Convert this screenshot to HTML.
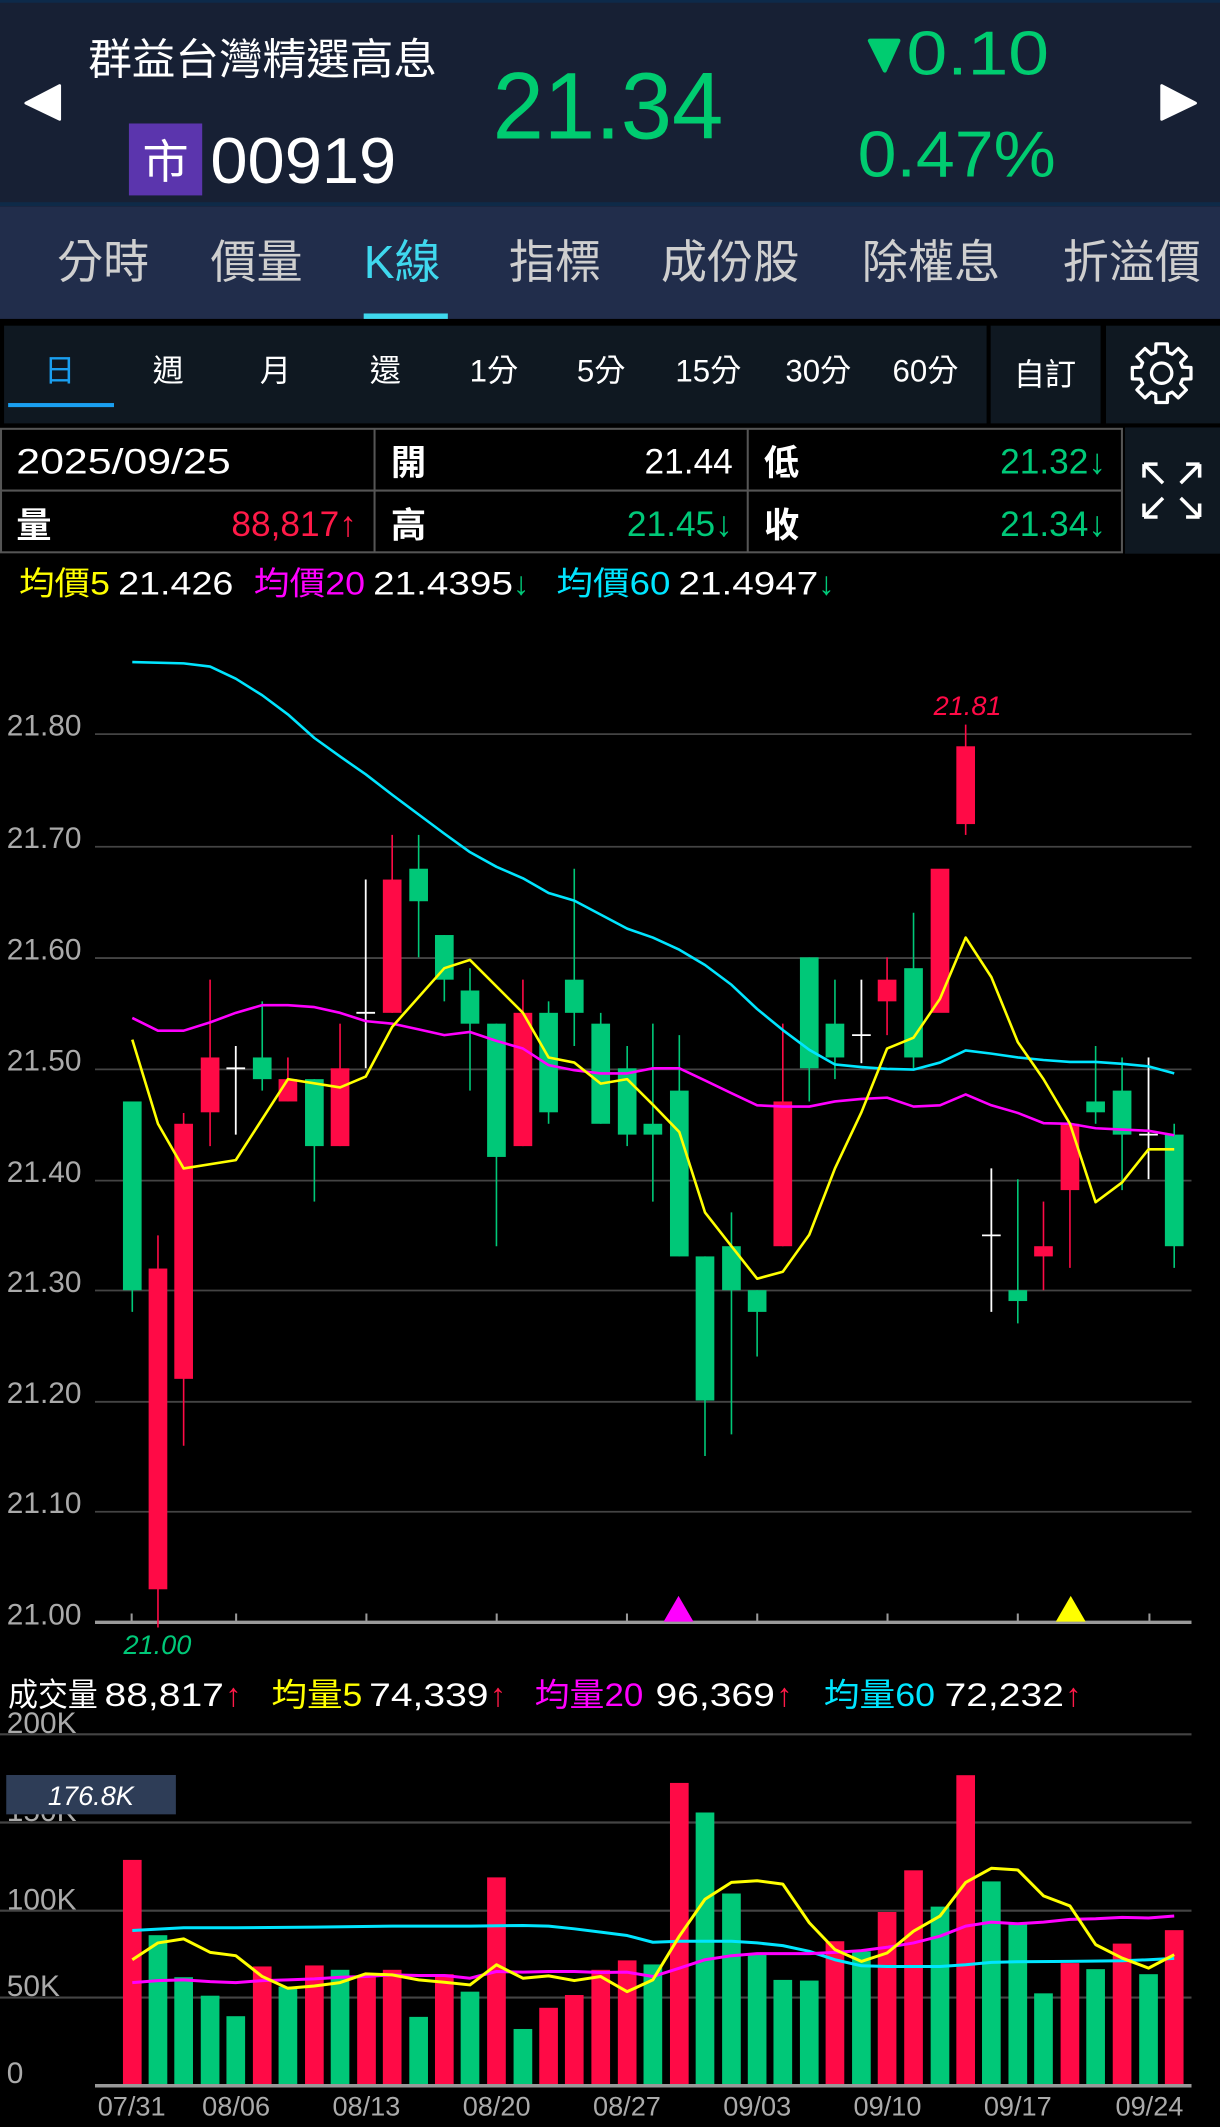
<!DOCTYPE html>
<html><head><meta charset="utf-8"><style>
html,body{margin:0;padding:0;background:#000;width:1220px;height:2127px;overflow:hidden}
svg{display:block}
text{font-family:"Liberation Sans","Noto Sans CJK TC",sans-serif}
</style></head><body>
<svg width="1220" height="2127" viewBox="0 0 899 1567.4" preserveAspectRatio="none" xmlns="http://www.w3.org/2000/svg">
<rect width="899" height="1568" fill="#000"/>
<!-- header -->
<rect x="0" y="0" width="899" height="151" fill="#172034"/>
<rect x="0" y="0" width="899" height="2" fill="#0d2a4a"/>
<rect x="0" y="149" width="899" height="3" fill="#0e2a48"/>
<text x="65" y="55" font-size="32" fill="#fff" textLength="257" lengthAdjust="spacingAndGlyphs">群益台灣精選高息</text>
<path d="M44 63 L44 88 L19 76 Z" fill="#fff" stroke="#fff" stroke-width="2" stroke-linejoin="round"/>
<path d="M856 63 L856 88 L881 76 Z" fill="#fff" stroke="#fff" stroke-width="2" stroke-linejoin="round"/>
<rect x="95" y="91" width="54" height="53" fill="#5b35ad"/>
<text x="122" y="131" font-size="34" fill="#fff" text-anchor="middle">市</text>
<text x="155" y="135" font-size="48" fill="#fff" textLength="137" lengthAdjust="spacingAndGlyphs">00919</text>
<text x="363" y="102" font-size="70" fill="#00cc70" textLength="170" lengthAdjust="spacingAndGlyphs">21.34</text>
<path d="M641 30 L662 30 L652 52 Z" fill="#00cc70" stroke="#00cc70" stroke-width="3" stroke-linejoin="round"/>
<text x="668" y="55" font-size="46" fill="#00cc70" textLength="105" lengthAdjust="spacingAndGlyphs">0.10</text>
<text x="632" y="130" font-size="48" fill="#00cc70" textLength="146" lengthAdjust="spacingAndGlyphs">0.47%</text>
<!-- tabs -->
<rect x="0" y="152" width="899" height="83" fill="#212d4b"/>
<g font-size="34" fill="#cfcfcf">
<text x="42" y="205">分時</text>
<text x="155" y="205">價量</text>
<text x="268" y="205" fill="#3fd8ee">K線</text>
<text x="375" y="205">指標</text>
<text x="487" y="205">成份股</text>
<text x="635" y="205">除權息</text>
<text x="783" y="205">折溢價</text>
</g>
<rect x="268" y="231" width="62" height="4" fill="#3fd8ee"/>
<!-- period bar -->
<rect x="3" y="240" width="724" height="72" fill="#0f1821"/>
<rect x="730" y="240" width="81" height="72" fill="#0f1821"/>
<rect x="815" y="240" width="84" height="72" fill="#0f1821"/>
<g font-size="23" fill="#fff" text-anchor="middle">
<text x="44" y="281" fill="#1a9ff0">日</text>
<text x="124" y="281">週</text>
<text x="203" y="281">月</text>
<text x="284" y="281">還</text>
<text x="364" y="281">1分</text>
<text x="443" y="281">5分</text>
<text x="522" y="281">15分</text>
<text x="603" y="281">30分</text>
<text x="682" y="281">60分</text>
<text x="770" y="284">自訂</text>
</g>
<rect x="6" y="297" width="78" height="3" fill="#1a9ff0"/>
<path transform="translate(856,275)" fill="none" stroke="#fff" stroke-width="2.4" stroke-linejoin="round" d="M-4.2,-21.6 L4.2,-21.6 L4.4,-15.4 L7.8,-14.0 L12.3,-18.2 L18.2,-12.3 L14.0,-7.8 L15.4,-4.4 L21.6,-4.2 L21.6,4.2 L15.4,4.4 L14.0,7.8 L18.2,12.3 L12.3,18.2 L7.8,14.0 L4.4,15.4 L4.2,21.6 L-4.2,21.6 L-4.4,15.4 L-7.8,14.0 L-12.3,18.2 L-18.2,12.3 L-14.0,7.8 L-15.4,4.4 L-21.6,4.2 L-21.6,-4.2 L-15.4,-4.4 L-14.0,-7.8 L-18.2,-12.3 L-12.3,-18.2 L-7.8,-14.0 L-4.4,-15.4 Z"/>
<circle cx="856" cy="275" r="7.5" fill="none" stroke="#fff" stroke-width="2.4"/>
<!-- info table -->
<rect x="829" y="315" width="70" height="93" fill="#0f1821"/>
<g fill="none" stroke="#555" stroke-width="1.5">
<rect x="0.75" y="316" width="826" height="91"/>
<line x1="0" y1="361.5" x2="827" y2="361.5"/>
<line x1="276" y1="316" x2="276" y2="407"/>
<line x1="551" y1="316" x2="551" y2="407"/>
</g>
<g font-size="26" fill="#fff">
<text x="12" y="349" textLength="158" lengthAdjust="spacingAndGlyphs">2025/09/25</text>
<text x="288" y="350" font-weight="bold">開</text>
<text x="540" y="349" text-anchor="end">21.44</text>
<text x="563" y="350" font-weight="bold">低</text>
<text x="815" y="349" text-anchor="end" fill="#00c878">21.32↓</text>
<text x="12" y="396" font-weight="bold">量</text>
<text x="263" y="395" text-anchor="end" fill="#ff1a48">88,817↑</text>
<text x="288" y="396" font-weight="bold">高</text>
<text x="540" y="395" text-anchor="end" fill="#00c878">21.45↓</text>
<text x="563" y="396" font-weight="bold">收</text>
<text x="815" y="395" text-anchor="end" fill="#00c878">21.34↓</text>
</g>
<g stroke="#fff" stroke-width="2.6" fill="none">
<path d="M843 342 L857 356 M843 342 L843 352 M843 342 L853 342"/>
<path d="M884 342 L870 356 M884 342 L884 352 M884 342 L874 342"/>
<path d="M843 381 L857 367 M843 381 L843 371 M843 381 L853 381"/>
<path d="M884 381 L870 367 M884 381 L884 371 M884 381 L874 381"/>
</g>
<!-- MA legend -->
<g font-size="24">
<text x="14" y="438" fill="#ffff00" textLength="67" lengthAdjust="spacingAndGlyphs">均價5</text>
<text x="87" y="438" fill="#fff" textLength="85" lengthAdjust="spacingAndGlyphs">21.426</text>
<text x="187" y="438" fill="#ff00ff" textLength="82" lengthAdjust="spacingAndGlyphs">均價20</text>
<text x="275" y="438" fill="#fff" textLength="103" lengthAdjust="spacingAndGlyphs">21.4395</text>
<text x="378" y="438" fill="#00c878">↓</text>
<text x="410" y="438" fill="#00e5ff" textLength="84" lengthAdjust="spacingAndGlyphs">均價60</text>
<text x="500" y="438" fill="#fff" textLength="103" lengthAdjust="spacingAndGlyphs">21.4947</text>
<text x="603" y="438" fill="#00c878">↓</text>
</g>
<!-- price grid -->
<g stroke="#444" stroke-width="1.3">
<line x1="70" y1="541" x2="878" y2="541"/>
<line x1="70" y1="624" x2="878" y2="624"/>
<line x1="70" y1="706" x2="878" y2="706"/>
<line x1="70" y1="788" x2="878" y2="788"/>
<line x1="70" y1="870" x2="878" y2="870"/>
<line x1="70" y1="951" x2="878" y2="951"/>
<line x1="70" y1="1033" x2="878" y2="1033"/>
<line x1="70" y1="1114" x2="878" y2="1114"/>
</g>
<g font-size="22" fill="#aaa">
<text x="5" y="542">21.80</text>
<text x="5" y="625">21.70</text>
<text x="5" y="707">21.60</text>
<text x="5" y="789">21.50</text>
<text x="5" y="871">21.40</text>
<text x="5" y="952">21.30</text>
<text x="5" y="1034">21.20</text>
<text x="5" y="1115">21.10</text>
<text x="5" y="1197">21.00</text>
</g>
<line x1="70" y1="1195.5" x2="878" y2="1195.5" stroke="#999" stroke-width="2.5"/>
<g stroke="#999" stroke-width="1.5">
<line x1="97" y1="1189" x2="97" y2="1195"/><line x1="174" y1="1189" x2="174" y2="1195"/>
<line x1="270" y1="1189" x2="270" y2="1195"/><line x1="366" y1="1189" x2="366" y2="1195"/>
<line x1="462" y1="1189" x2="462" y2="1195"/><line x1="558" y1="1189" x2="558" y2="1195"/>
<line x1="654" y1="1189" x2="654" y2="1195"/><line x1="750" y1="1189" x2="750" y2="1195"/>
<line x1="847" y1="1189" x2="847" y2="1195"/>
</g>
<g transform="translate(0,456.9) scale(0.5734,0.4699)">
<g>
<g stroke="#00c878" stroke-width="1.6">
<line x1="170" y1="755" x2="170" y2="1085" vector-effect="non-scaling-stroke"/>
<line x1="337" y1="598" x2="337" y2="738" vector-effect="non-scaling-stroke"/>
<line x1="404" y1="720" x2="404" y2="912" vector-effect="non-scaling-stroke"/>
<line x1="538" y1="337" x2="538" y2="529" vector-effect="non-scaling-stroke"/>
<line x1="571" y1="494" x2="571" y2="598" vector-effect="non-scaling-stroke"/>
<line x1="604" y1="546" x2="604" y2="738" vector-effect="non-scaling-stroke"/>
<line x1="638" y1="633" x2="638" y2="982" vector-effect="non-scaling-stroke"/>
<line x1="705" y1="598" x2="705" y2="790" vector-effect="non-scaling-stroke"/>
<line x1="738" y1="390" x2="738" y2="668" vector-effect="non-scaling-stroke"/>
<line x1="772" y1="616" x2="772" y2="790" vector-effect="non-scaling-stroke"/>
<line x1="806" y1="668" x2="806" y2="825" vector-effect="non-scaling-stroke"/>
<line x1="839" y1="633" x2="839" y2="912" vector-effect="non-scaling-stroke"/>
<line x1="873" y1="651" x2="873" y2="998" vector-effect="non-scaling-stroke"/>
<line x1="906" y1="998" x2="906" y2="1311" vector-effect="non-scaling-stroke"/>
<line x1="940" y1="929" x2="940" y2="1277" vector-effect="non-scaling-stroke"/>
<line x1="973" y1="1051" x2="973" y2="1155" vector-effect="non-scaling-stroke"/>
<line x1="1040" y1="529" x2="1040" y2="755" vector-effect="non-scaling-stroke"/>
<line x1="1073" y1="564" x2="1073" y2="720" vector-effect="non-scaling-stroke"/>
<line x1="1174" y1="459" x2="1174" y2="703" vector-effect="non-scaling-stroke"/>
<line x1="1308" y1="877" x2="1308" y2="1103" vector-effect="non-scaling-stroke"/>
<line x1="1408" y1="668" x2="1408" y2="790" vector-effect="non-scaling-stroke"/>
<line x1="1442" y1="686" x2="1442" y2="894" vector-effect="non-scaling-stroke"/>
<line x1="1509" y1="790" x2="1509" y2="1016" vector-effect="non-scaling-stroke"/>
</g>
<g stroke="#ff0a46" stroke-width="1.6">
<line x1="203" y1="965" x2="203" y2="1580" vector-effect="non-scaling-stroke"/>
<line x1="236" y1="773" x2="236" y2="1295" vector-effect="non-scaling-stroke"/>
<line x1="270" y1="564" x2="270" y2="825" vector-effect="non-scaling-stroke"/>
<line x1="370" y1="686" x2="370" y2="755" vector-effect="non-scaling-stroke"/>
<line x1="437" y1="633" x2="437" y2="825" vector-effect="non-scaling-stroke"/>
<line x1="504" y1="337" x2="504" y2="616" vector-effect="non-scaling-stroke"/>
<line x1="672" y1="564" x2="672" y2="825" vector-effect="non-scaling-stroke"/>
<line x1="1006" y1="633" x2="1006" y2="982" vector-effect="non-scaling-stroke"/>
<line x1="1140" y1="529" x2="1140" y2="651" vector-effect="non-scaling-stroke"/>
<line x1="1241" y1="164" x2="1241" y2="337" vector-effect="non-scaling-stroke"/>
<line x1="1341" y1="912" x2="1341" y2="1051" vector-effect="non-scaling-stroke"/>
<line x1="1375" y1="790" x2="1375" y2="1016" vector-effect="non-scaling-stroke"/>
</g>
<g stroke="#fff" stroke-width="1.8">
<line x1="303" y1="668" x2="303" y2="807" vector-effect="non-scaling-stroke"/>
<line x1="291" y1="703" x2="315" y2="703" vector-effect="non-scaling-stroke"/>
<line x1="470" y1="407" x2="470" y2="703" vector-effect="non-scaling-stroke"/>
<line x1="458" y1="616" x2="482" y2="616" vector-effect="non-scaling-stroke"/>
<line x1="1107" y1="564" x2="1107" y2="695" vector-effect="non-scaling-stroke"/>
<line x1="1095" y1="651" x2="1119" y2="651" vector-effect="non-scaling-stroke"/>
<line x1="1274" y1="860" x2="1274" y2="1085" vector-effect="non-scaling-stroke"/>
<line x1="1262" y1="965" x2="1286" y2="965" vector-effect="non-scaling-stroke"/>
<line x1="1476" y1="686" x2="1476" y2="877" vector-effect="non-scaling-stroke"/>
<line x1="1464" y1="807" x2="1488" y2="807" vector-effect="non-scaling-stroke"/>
</g>
</g>
<g fill="#00c878">
<rect x="158" y="755" width="24" height="296"/>
<rect x="325" y="686" width="24" height="34"/>
<rect x="392" y="720" width="24" height="105"/>
<rect x="526" y="390" width="24" height="51"/>
<rect x="559" y="494" width="24" height="70"/>
<rect x="592" y="581" width="24" height="52"/>
<rect x="626" y="633" width="24" height="209"/>
<rect x="693" y="616" width="24" height="156"/>
<rect x="726" y="564" width="24" height="52"/>
<rect x="760" y="633" width="24" height="157"/>
<rect x="794" y="703" width="24" height="104"/>
<rect x="827" y="790" width="24" height="17"/>
<rect x="861" y="738" width="24" height="260"/>
<rect x="894" y="998" width="24" height="226"/>
<rect x="928" y="982" width="24" height="69"/>
<rect x="961" y="1051" width="24" height="34"/>
<rect x="1028" y="529" width="24" height="174"/>
<rect x="1061" y="633" width="24" height="53"/>
<rect x="1162" y="546" width="24" height="140"/>
<rect x="1296" y="1051" width="24" height="17"/>
<rect x="1396" y="755" width="24" height="17"/>
<rect x="1430" y="738" width="24" height="69"/>
<rect x="1497" y="807" width="24" height="175"/>
</g>
<g fill="#ff0a46">
<rect x="191" y="1017" width="24" height="503"/>
<rect x="224" y="790" width="24" height="400"/>
<rect x="258" y="686" width="24" height="86"/>
<rect x="358" y="720" width="24" height="35"/>
<rect x="425" y="703" width="24" height="122"/>
<rect x="492" y="407" width="24" height="209"/>
<rect x="660" y="616" width="24" height="209"/>
<rect x="994" y="755" width="24" height="227"/>
<rect x="1128" y="564" width="24" height="34"/>
<rect x="1196" y="390" width="24" height="226"/>
<rect x="1229" y="198" width="24" height="122"/>
<rect x="1329" y="982" width="24" height="16"/>
<rect x="1363" y="790" width="24" height="104"/>
</g>
<g fill="none" stroke-width="2.6" stroke-linejoin="round">
<polyline vector-effect="non-scaling-stroke" stroke="#00e5ff" points="170,66 236,68 270,73 303,92 337,118 370,148 404,185 437,214 470,242 504,274 538,305 571,335 604,364 638,387 672,405 705,428 738,440 772,462 806,484 839,498 873,517 906,541 940,572 973,610 1006,643 1040,674 1073,697 1107,701 1140,704 1174,705 1208,694 1241,675 1274,680 1308,686 1341,690 1375,693 1408,693 1442,696 1476,700 1509,711"/>
<polyline vector-effect="non-scaling-stroke" stroke="#ff00ff" points="170,624 203,644 236,644 270,631 303,616 337,604 370,604 404,607 437,616 470,629 504,633 538,642 571,651 604,646 638,660 672,672 705,698 738,706 772,711 806,711 839,703 873,703 906,722 940,742 973,761 1006,763 1040,763 1073,755 1107,751 1140,749 1174,763 1208,761 1241,744 1274,761 1308,773 1341,789 1375,790 1408,797 1442,799 1476,801 1509,808"/>
<polyline vector-effect="non-scaling-stroke" stroke="#ffff00" points="170,658 203,790 236,860 303,847 370,720 437,733 470,716 504,638 571,546 604,533 672,616 705,686 738,694 772,727 806,720 839,760 873,803 906,929 940,982 973,1033 1006,1022 1040,964 1073,860 1107,772 1140,672 1174,655 1208,594 1241,498 1274,560 1308,662 1341,720 1375,790 1408,913 1442,882 1476,830 1509,830"/>
</g>
</g>
<text x="713" y="527" font-size="20" font-style="italic" fill="#ff0a46" text-anchor="middle">21.81</text>
<text x="116" y="1219" font-size="20" font-style="italic" fill="#00c878" text-anchor="middle">21.00</text>
<path d="M500 1176 L489 1195 L511 1195 Z" fill="#ff00ff"/>
<path d="M789 1176 L778 1195 L800 1195 Z" fill="#ffff00"/>
<!-- volume legend -->
<g font-size="24">
<text x="6" y="1257" fill="#fff" textLength="66" lengthAdjust="spacingAndGlyphs">成交量</text>
<text x="77" y="1257" fill="#fff" textLength="88" lengthAdjust="spacingAndGlyphs">88,817</text>
<text x="166" y="1257" fill="#ff1a48">↑</text>
<text x="200" y="1257" fill="#ffff00" textLength="67" lengthAdjust="spacingAndGlyphs">均量5</text>
<text x="272" y="1257" fill="#fff" textLength="88" lengthAdjust="spacingAndGlyphs">74,339</text>
<text x="361" y="1257" fill="#ff1a48">↑</text>
<text x="394" y="1257" fill="#ff00ff" textLength="80" lengthAdjust="spacingAndGlyphs">均量20</text>
<text x="483" y="1257" fill="#fff" textLength="88" lengthAdjust="spacingAndGlyphs">96,369</text>
<text x="572" y="1257" fill="#ff1a48">↑</text>
<text x="607" y="1257" fill="#00e5ff" textLength="82" lengthAdjust="spacingAndGlyphs">均量60</text>
<text x="696" y="1257" fill="#fff" textLength="88" lengthAdjust="spacingAndGlyphs">72,232</text>
<text x="785" y="1257" fill="#ff1a48">↑</text>
</g>
<g stroke="#444" stroke-width="1.6">
<line x1="0" y1="1278" x2="878" y2="1278"/>
<line x1="0" y1="1343" x2="878" y2="1343"/>
<line x1="0" y1="1408" x2="878" y2="1408"/>
<line x1="0" y1="1472" x2="878" y2="1472"/>
</g>
<g font-size="22" fill="#aaa">
<text x="5" y="1277">200K</text>
<text x="5" y="1342">150K</text>
<text x="5" y="1407">100K</text>
<text x="5" y="1471">50K</text>
<text x="5" y="1535">0</text>
</g>
<g transform="translate(0,1179.1) scale(0.5734,0.2477)">
<g fill="#ff0a46">
<rect x="158" y="773" width="24" height="672"/>
<rect x="325" y="1090" width="24" height="355"/>
<rect x="392" y="1087" width="24" height="358"/>
<rect x="459" y="1120" width="24" height="325"/>
<rect x="492" y="1100" width="24" height="345"/>
<rect x="559" y="1113" width="24" height="332"/>
<rect x="626" y="825" width="24" height="620"/>
<rect x="693" y="1213" width="24" height="232"/>
<rect x="726" y="1175" width="24" height="270"/>
<rect x="760" y="1100" width="24" height="345"/>
<rect x="794" y="1072" width="24" height="373"/>
<rect x="861" y="544" width="24" height="901"/>
<rect x="1061" y="1015" width="24" height="430"/>
<rect x="1128" y="928" width="24" height="517"/>
<rect x="1162" y="804" width="24" height="641"/>
<rect x="1229" y="521" width="24" height="924"/>
<rect x="1363" y="1080" width="24" height="365"/>
<rect x="1430" y="1022" width="24" height="423"/>
<rect x="1497" y="982" width="24" height="463"/>
</g>
<g fill="#00c878">
<rect x="191" y="997" width="24" height="448"/>
<rect x="224" y="1122" width="24" height="323"/>
<rect x="258" y="1177" width="24" height="268"/>
<rect x="291" y="1238" width="24" height="207"/>
<rect x="358" y="1150" width="24" height="295"/>
<rect x="425" y="1100" width="24" height="345"/>
<rect x="526" y="1240" width="24" height="205"/>
<rect x="592" y="1165" width="24" height="280"/>
<rect x="660" y="1276" width="24" height="169"/>
<rect x="827" y="1084" width="24" height="361"/>
<rect x="894" y="632" width="24" height="813"/>
<rect x="928" y="873" width="24" height="572"/>
<rect x="961" y="1055" width="24" height="390"/>
<rect x="994" y="1130" width="24" height="315"/>
<rect x="1028" y="1132" width="24" height="313"/>
<rect x="1095" y="1045" width="24" height="400"/>
<rect x="1196" y="912" width="24" height="533"/>
<rect x="1262" y="837" width="24" height="608"/>
<rect x="1296" y="965" width="24" height="480"/>
<rect x="1329" y="1170" width="24" height="275"/>
<rect x="1396" y="1098" width="24" height="347"/>
<rect x="1464" y="1113" width="24" height="332"/>
</g>
<g fill="none" stroke-width="3" stroke-linejoin="round">
<polyline vector-effect="non-scaling-stroke" stroke="#00e5ff" points="170,983 236,975 303,975 404,973 504,970 604,970 672,968 705,970 738,978 772,988 806,998 839,1018 873,1015 940,1015 973,1020 1006,1028 1040,1045 1073,1070 1107,1088 1140,1090 1208,1090 1241,1085 1274,1078 1308,1076 1375,1075 1442,1073 1476,1070 1509,1066"/>
<polyline vector-effect="non-scaling-stroke" stroke="#ff00ff" points="170,1138 203,1132 236,1130 270,1135 303,1138 337,1132 370,1130 404,1127 437,1122 470,1120 504,1115 538,1117 571,1117 604,1125 638,1105 672,1107 705,1105 738,1105 772,1108 806,1107 839,1120 873,1095 906,1070 940,1058 973,1052 1006,1052 1040,1052 1073,1048 1107,1043 1140,1033 1174,1020 1208,1000 1241,970 1274,958 1308,963 1341,958 1375,950 1408,948 1442,944 1476,946 1509,940"/>
<polyline vector-effect="non-scaling-stroke" stroke="#ffff00" points="170,1070 203,1020 236,1008 270,1048 303,1058 337,1120 370,1155 404,1148 437,1138 470,1112 504,1115 538,1130 571,1137 604,1145 638,1085 672,1125 705,1118 738,1132 772,1120 806,1165 839,1130 873,1000 906,890 940,840 973,835 1006,845 1040,960 1073,1040 1107,1075 1140,1050 1174,985 1208,940 1241,840 1274,798 1308,803 1341,880 1375,910 1408,1025 1442,1065 1476,1095 1509,1055"/>
</g>
</g>
<rect x="4.6" y="1308" width="125" height="29" fill="#2e3d57"/>
<text x="67" y="1330" font-size="20" font-style="italic" fill="#fff" text-anchor="middle">176.8K</text>
<line x1="70" y1="1537" x2="878" y2="1537" stroke="#999" stroke-width="2.5"/>
<g font-size="20" fill="#aaa" text-anchor="middle">
<text x="97" y="1559">07/31</text>
<text x="174" y="1559">08/06</text>
<text x="270" y="1559">08/13</text>
<text x="366" y="1559">08/20</text>
<text x="462" y="1559">08/27</text>
<text x="558" y="1559">09/03</text>
<text x="654" y="1559">09/10</text>
<text x="750" y="1559">09/17</text>
<text x="847" y="1559">09/24</text>
</g>
</svg>
</body></html>
